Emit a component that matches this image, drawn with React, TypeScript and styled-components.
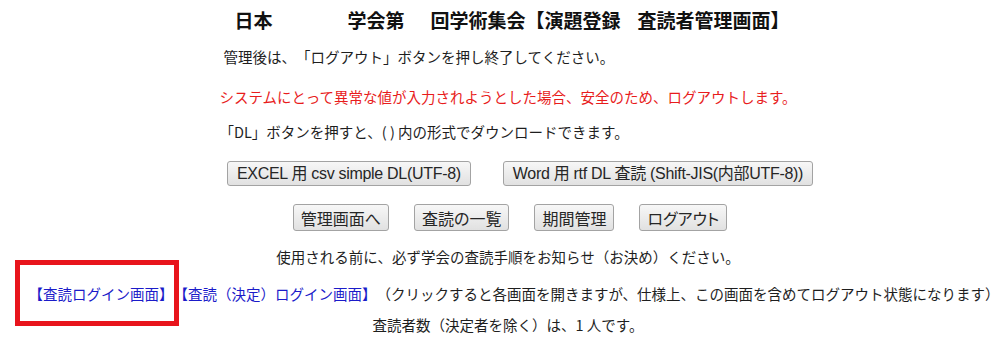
import React from 'react';
import styled, { createGlobalStyle } from 'styled-components';

const GlobalStyle = createGlobalStyle`
  html, body {
    margin: 0;
    padding: 0;
    background: #ffffff;
  }
  body {
    font-family: "Noto Sans CJK JP", "Liberation Sans", sans-serif;
    font-size: 14.5px;
    color: #1e1e1e;
    text-spacing-trim: space-all;
  }
`;

const Page = styled.div`
  width: 1000px;
  height: 342px;
  box-sizing: border-box;
  padding-left: 16px;
  display: flex;
  flex-direction: column;
  align-items: center;
  overflow: hidden;
`;

const Title = styled.h1`
  margin: 8px 0 0 8px;
  font-size: 19px;
  line-height: 24px;
  font-weight: 700;
  color: #111;
  white-space: nowrap;
`;

const Blank = styled.span<{ $w: number }>`
  display: inline-block;
  width: ${p => p.$w}px;
`;

const Notes = styled.div`
  margin-top: 15px;
  text-align: left;
`;

const Line = styled.p<{ $gap?: number; $warn?: boolean; $indent?: number }>`
  margin: ${p => p.$gap ?? 0}px 0 0 ${p => p.$indent ?? 0}px;
  line-height: 20px;
  white-space: nowrap;
  color: ${p => (p.$warn ? '#e81c1c' : '#1e1e1e')};
`;

const ButtonRow = styled.div<{ $gap: number; $top: number; $shift?: number }>`
  display: flex;
  gap: ${p => p.$gap}px;
  margin: ${p => p.$top}px 0 0 ${p => p.$shift ?? 0}px;
`;

const Button = styled.button<{ $latin?: boolean }>`
  box-sizing: border-box;
  height: ${p => (p.$latin ? 25 : 27)}px;
  padding: 0 ${p => (p.$latin ? 9 : 7)}px;
  border: 1px solid #a3a3a3;
  border-radius: 3px;
  background: linear-gradient(#f7f7f7, #e1e1e1);
  color: #262626;
  font-family: ${p =>
    p.$latin
      ? '"Liberation Sans", "Noto Sans CJK JP", sans-serif'
      : '"Noto Sans CJK JP", sans-serif'};
  font-size: 16px;
  font-feature-settings: "palt";
  letter-spacing: ${p => (p.$latin ? '-0.3px' : '0')};
  line-height: 1;
  white-space: nowrap;
  cursor: pointer;
`;

const CenterText = styled.p<{ $gap: number; $shift?: number }>`
  margin: ${p => p.$gap}px 0 0 ${p => p.$shift ?? 0}px;
  line-height: 20px;
  white-space: nowrap;
  text-align: center;
`;

const Link = styled.a<{ $marked?: boolean }>`
  position: relative;
  color: #1b1bc9;
  text-decoration: none;

  ${p =>
    p.$marked &&
    `
    &::after {
      content: '';
      position: absolute;
      top: -23px;
      bottom: -22px;
      left: -13px;
      right: -6px;
      border: 5px solid #e8141c;
      pointer-events: none;
    }
  `}
`;

export default function App() {
  return (
    <>
      <GlobalStyle />
      <Page>
        <Title>
          日本<Blank $w={75} />学会第<Blank $w={26} />回学術集会【演題登録<Blank $w={17} />査読者管理画面】
        </Title>

        <Notes>
          <Line $indent={4}>管理後は、「ログアウト」ボタンを押し終了してください。</Line>
          <Line $gap={20} $warn>
            システムにとって異常な値が入力されようとした場合、安全のため、ログアウトします。
          </Line>
          <Line $gap={15}>「DL」ボタンを押すと、( ) 内の形式でダウンロードできます。</Line>
        </Notes>

        <ButtonRow $gap={32} $top={19} $shift={24}>
          <Button $latin>EXCEL 用 csv simple DL(UTF-8)</Button>
          <Button $latin>Word 用 rtf DL 査読 (Shift-JIS(内部UTF-8))</Button>
        </ButtonRow>

        <ButtonRow $gap={25} $top={18} $shift={4}>
          <Button>管理画面へ</Button>
          <Button>査読の一覧</Button>
          <Button>期間管理</Button>
          <Button>ログアウト</Button>
        </ButtonRow>

        <CenterText $gap={16}>使用される前に、必ず学会の査読手順をお知らせ（お決め）ください。</CenterText>

        <CenterText $gap={17} $shift={12}>
          <Link href="#" $marked>【査読ログイン画面】</Link>
          <Link href="#">【査読（決定）ログイン画面】</Link>
          （クリックすると各画面を開きますが、仕様上、この画面を含めてログアウト状態になります）
        </CenterText>

        <CenterText $gap={11}>査読者数（決定者を除く）は、1 人です。</CenterText>
      </Page>
    </>
  );
}
